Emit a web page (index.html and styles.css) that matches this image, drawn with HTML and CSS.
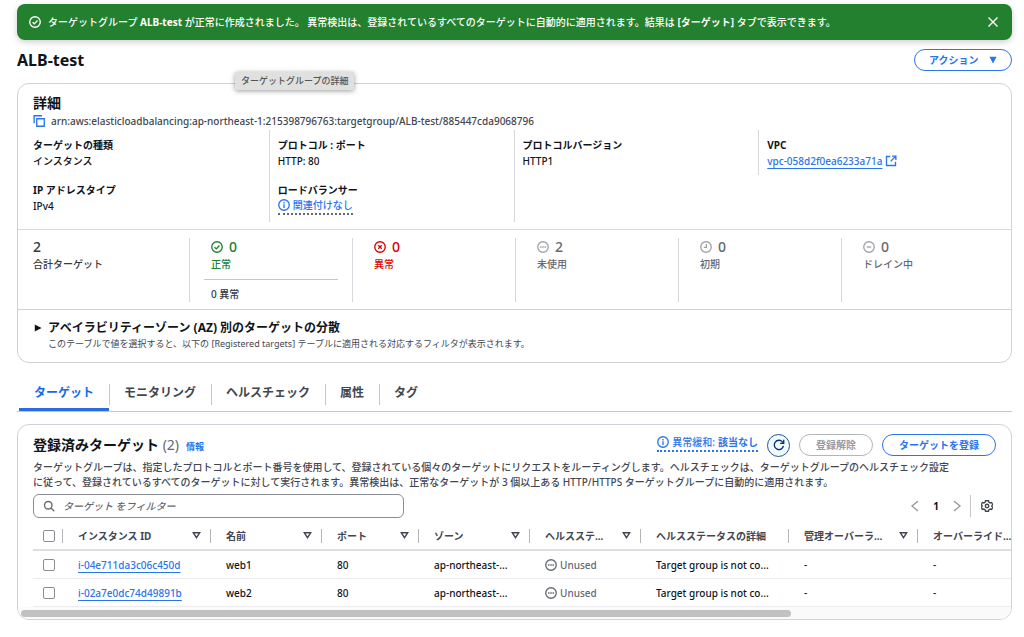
FILE: index.html
```html
<!DOCTYPE html>
<html lang="ja">
<head>
    <meta charset="UTF-8">
    <meta name="viewport" content="width=device-width, initial-scale=1.0">
    <title>ALB-test | ターゲットグループ</title>
    <link rel="stylesheet" href="styles.css">
</head>
<body>

    <!-- アイコン定義 -->
    <svg class="defs" aria-hidden="true">
        <symbol id="i-check" viewBox="0 0 16 16"><circle cx="8" cy="8" r="7"/><path d="M4.8 8.2l2.3 2.3 4.2-4.6"/></symbol>
        <symbol id="i-error" viewBox="0 0 16 16"><circle cx="8" cy="8" r="7"/><path d="M5.7 5.7l4.6 4.6M10.3 5.7l-4.6 4.6"/></symbol>
        <symbol id="i-dots" viewBox="0 0 16 16"><circle cx="8" cy="8" r="7"/><path d="M4 8h2M7 8h2M10 8h2"/></symbol>
        <symbol id="i-clock" viewBox="0 0 16 16"><circle cx="8" cy="8" r="7"/><path d="M8.5 4v4.5H5"/></symbol>
        <symbol id="i-minus" viewBox="0 0 16 16"><circle cx="8" cy="8" r="7"/><path d="M5 8h6"/></symbol>
        <symbol id="i-info" viewBox="0 0 16 16"><circle cx="8" cy="8" r="7"/><path d="M8 4v2M8 7v5"/></symbol>
        <symbol id="i-sort" viewBox="0 0 10 10"><path d="M1.5 2h7L5 7.5z"/></symbol>
    </svg>

    <div class="flash" role="status">
        <svg class="icon"><use href="#i-check"/></svg>
        <p>ターゲットグループ <b>ALB-test</b> が正常に作成されました。 異常検出は、登録されているすべてのターゲットに自動的に適用されます。結果は <b>[ターゲット]</b> タブで表示できます。</p>
        <button class="icon-btn" aria-label="閉じる"><svg class="icon" viewBox="0 0 16 16"><path d="M2 2l12 12M14 2L2 14"/></svg></button>
    </div>

    <header class="page-header">
        <h1>ALB-test</h1>
        <button class="btn btn-action">アクション <svg class="caret" viewBox="0 0 10 10"><path d="M0.5 1h9L5 9.5z"/></svg></button>
    </header>

    <main>
        <section class="card details">
            <div class="tooltip" role="tooltip">ターゲットグループの詳細</div>
            <div class="details-head">
                <h2>詳細</h2>
                <div class="arn">
                    <button class="icon-btn" aria-label="ARN をコピー"><svg class="icon copy" viewBox="0 0 16 16"><path d="M5 5h10v10H5zM1.5 11V1H12"/></svg></button>
                    <span>arn:aws:elasticloadbalancing:ap-northeast-1:215398796763:targetgroup/ALB-test/885447cda9068796</span>
                </div>
            </div>

            <div class="attributes">
                <dl>
                    <dt>ターゲットの種類</dt>
                    <dd>インスタンス</dd>
                    <dt>IP アドレスタイプ</dt>
                    <dd>IPv4</dd>
                </dl>
                <dl>
                    <dt>プロトコル : ポート</dt>
                    <dd>HTTP: 80</dd>
                    <dt>ロードバランサー</dt>
                    <dd><button class="popover-link dark"><svg class="icon"><use href="#i-info"/></svg>関連付けなし</button></dd>
                </dl>
                <dl>
                    <dt>プロトコルバージョン</dt>
                    <dd>HTTP1</dd>
                </dl>
                <dl class="short">
                    <dt>VPC</dt>
                    <dd><a href="#">vpc-058d2f0ea6233a71a</a><svg class="icon external" viewBox="0 0 16 16"><path d="M7 2H2v12h12V9M9.5 1.5h5v5M14 2L7.5 8.5"/></svg></dd>
                </dl>
            </div>

            <div class="stats">
                <div class="stat">
                    <div class="count">2</div>
                    <div>合計ターゲット</div>
                </div>
                <div class="stat healthy">
                    <div class="count"><svg class="icon"><use href="#i-check"/></svg>0</div>
                    <div>正常</div>
                    <div class="anomalous">0 異常</div>
                </div>
                <div class="stat unhealthy">
                    <div class="count"><svg class="icon"><use href="#i-error"/></svg>0</div>
                    <div>異常</div>
                </div>
                <div class="stat muted">
                    <div class="count"><svg class="icon"><use href="#i-dots"/></svg>2</div>
                    <div>未使用</div>
                </div>
                <div class="stat muted">
                    <div class="count"><svg class="icon"><use href="#i-clock"/></svg>0</div>
                    <div>初期</div>
                </div>
                <div class="stat muted">
                    <div class="count"><svg class="icon"><use href="#i-minus"/></svg>0</div>
                    <div>ドレイン中</div>
                </div>
            </div>

            <div class="zones">
                <button class="expander" aria-expanded="false"><svg class="caret" viewBox="0 0 10 10"><path d="M1 0.5v9L9.5 5z"/></svg>アベイラビリティーゾーン (AZ) 別のターゲットの分散</button>
                <p>このテーブルで値を選択すると、以下の [Registered targets] テーブルに適用される対応するフィルタが表示されます。</p>
            </div>
        </section>

        <nav class="tabs" role="tablist">
            <button role="tab" class="tab active" aria-selected="true">ターゲット</button>
            <button role="tab" class="tab">モニタリング</button>
            <button role="tab" class="tab">ヘルスチェック</button>
            <button role="tab" class="tab">属性</button>
            <button role="tab" class="tab">タグ</button>
        </nav>

        <section class="card targets">
            <div class="targets-head">
                <h2>登録済みターゲット <span>(2)</span></h2>
                <a class="info" href="#">情報</a>
                <div class="actions">
                    <button class="popover-link"><svg class="icon"><use href="#i-info"/></svg>異常緩和: <b>該当なし</b></button>
                    <button class="btn btn-refresh" aria-label="更新"><svg class="icon" viewBox="0 0 16 16"><path d="M14 9.2A6.2 6.2 0 1 1 12.6 3.8L14 5.3M14.3 1v4.8H9.5"/></svg></button>
                    <button class="btn" disabled>登録解除</button>
                    <button class="btn">ターゲットを登録</button>
                </div>
            </div>
            <p class="description">ターゲットグループは、指定したプロトコルとポート番号を使用して、登録されている個々のターゲットにリクエストをルーティングします。ヘルスチェックは、ターゲットグループのヘルスチェック設定<br>に従って、登録されているすべてのターゲットに対して実行されます。異常検出は、正常なターゲットが 3 個以上ある HTTP/HTTPS ターゲットグループに自動的に適用されます。</p>

            <div class="toolbar">
                <label class="filter">
                    <svg class="icon" viewBox="0 0 16 16"><circle cx="7" cy="7" r="5"/><path d="M10.8 10.8L15 15"/></svg>
                    <input type="text" placeholder="ターゲット をフィルター" aria-label="ターゲット をフィルター">
                </label>
                <div class="pager">
                    <button class="icon-btn" aria-label="前へ"><svg class="icon" viewBox="0 0 16 16"><path d="M12 1.5L4 8l8 6.5"/></svg></button>
                    <b>1</b>
                    <button class="icon-btn" aria-label="次へ"><svg class="icon" viewBox="0 0 16 16"><path d="M4 1.5L12 8l-8 6.5"/></svg></button>
                </div>
                <button class="icon-btn settings" aria-label="設定"><svg class="icon" viewBox="0 0 16 16"><path d="M6 1h4l.6 2 1.6.9 2-.6 1.4 2.9L14.3 8l1.3 1.8-1.4 2.9-2-.6-1.6.9L10 15H6l-.6-2-1.6-.9-2 .6L.4 9.8 1.7 8 .4 6.2l1.4-2.9 2 .6L5.4 3z"/><circle cx="8" cy="8" r="2.3"/></svg></button>
            </div>

            <div class="table-wrap">
                <table>
                    <colgroup>
                        <col class="c-select">
                        <col class="c-id">
                        <col class="c-name">
                        <col class="c-port">
                        <col class="c-zone">
                        <col class="c-health">
                        <col class="c-detail">
                        <col class="c-admin">
                        <col>
                    </colgroup>
                    <thead>
                        <tr>
                            <th class="select"><input type="checkbox" aria-label="すべて選択"></th>
                            <th><div><span>インスタンス ID</span><svg class="sort"><use href="#i-sort"/></svg></div></th>
                            <th><div><span>名前</span><svg class="sort"><use href="#i-sort"/></svg></div></th>
                            <th><div><span>ポート</span><svg class="sort"><use href="#i-sort"/></svg></div></th>
                            <th><div><span>ゾーン</span><svg class="sort"><use href="#i-sort"/></svg></div></th>
                            <th><div><span>ヘルスステ...</span><svg class="sort"><use href="#i-sort"/></svg></div></th>
                            <th><div><span>ヘルスステータスの詳細</span></div></th>
                            <th><div><span>管理オーバーラ...</span><svg class="sort"><use href="#i-sort"/></svg></div></th>
                            <th><div><span>オーバーライド...</span></div></th>
                        </tr>
                    </thead>
                    <tbody>
                        <tr>
                            <td class="select"><input type="checkbox" aria-label="web1 を選択"></td>
                            <td><a href="#">i-04e711da3c06c450d</a></td>
                            <td>web1</td>
                            <td>80</td>
                            <td>ap-northeast-...</td>
                            <td class="unused"><svg class="icon"><use href="#i-dots"/></svg>Unused</td>
                            <td>Target group is not co...</td>
                            <td>-</td>
                            <td>-</td>
                        </tr>
                        <tr>
                            <td class="select"><input type="checkbox" aria-label="web2 を選択"></td>
                            <td><a href="#">i-02a7e0dc74d49891b</a></td>
                            <td>web2</td>
                            <td>80</td>
                            <td>ap-northeast-...</td>
                            <td class="unused"><svg class="icon"><use href="#i-dots"/></svg>Unused</td>
                            <td>Target group is not co...</td>
                            <td>-</td>
                            <td>-</td>
                        </tr>
                    </tbody>
                </table>
            </div>
            <div class="scrollbar"><div class="thumb"></div></div>
        </section>
    </main>

</body>
</html>
```
FILE: styles.css
```css
* {
    box-sizing: border-box;
}

body {
    margin: 0;
    padding: 4px 12px 16px 17px;
    background-color: white;
    color: #0f141a;
    font-family: "Noto Sans", "Noto Sans CJK JP", sans-serif;
    font-size: 10px;
    font-weight: 500;
    line-height: 16px;
}

h1, h2, p, dl, dd {
    margin: 0;
}

button, input {
    font: inherit;
    color: inherit;
}

button {
    padding: 0;
    border: none;
    background: none;
    cursor: pointer;
    white-space: nowrap;
}

a {
    color: #2a74ec;
    text-underline-offset: 3px;
}

.defs {
    display: none;
}

.icon {
    width: 12px;
    height: 12px;
    flex: none;
    fill: none;
    stroke: currentColor;
    stroke-width: 1.8;
}

.icon-btn {
    display: flex;
    align-items: center;
}

.caret {
    width: 8px;
    height: 8px;
    fill: currentColor;
}

/* Bandeau */
.flash {
    display: flex;
    align-items: center;
    gap: 7px;
    height: 36px;
    padding: 0 13px 0 12px;
    border-radius: 8px;
    background-color: #22802e;
    color: white;
    box-shadow: 0 2px 6px rgba(0, 0, 0, 0.2);
}

.flash p {
    flex: 1;
    white-space: nowrap;
}

.page-header {
    display: flex;
    justify-content: space-between;
    align-items: center;
    height: 40px;
}

h1 {
    font-size: 16px;
    line-height: 24px;
}

h2 {
    font-size: 14px;
    line-height: 20px;
}

.btn {
    height: 22px;
    padding: 0 16px;
    border: 1px solid #2a74ec;
    border-radius: 11px;
    background-color: white;
    color: #2a74ec;
    font-weight: bold;
    line-height: 20px;
}

.btn:disabled {
    border-color: #b4b4bb;
    color: #9a9aa5;
}

.btn-action {
    padding: 0 14px;
}

.btn-action .caret {
    margin-left: 8px;
}

.card {
    position: relative;
    border: 1px solid #cfd2d8;
    border-radius: 12px;
}

.details {
    margin-top: 3px;
}

.tooltip {
    position: absolute;
    top: -12px;
    left: 217px;
    padding: 0 6px;
    border-radius: 2px;
    background-color: #e0e0df;
    color: #555;
    font-size: 9px;
    line-height: 18px;
    box-shadow: 0 1px 5px rgba(0, 0, 0, 0.4);
}

.details-head {
    padding: 9px 15px 0;
}

.arn {
    display: flex;
    align-items: center;
    gap: 6px;
    color: #424650;
}

.arn .icon {
    color: #2a74ec;
}

/* Attributs */
.attributes {
    display: grid;
    grid-template-columns: repeat(4, 1fr);
    padding: 1px 8px 7px 6px;
    border-bottom: 1px solid #d6d8dd;
}

.attributes dl {
    height: 92px;
    padding: 7px 8px 0;
    border-left: 1px solid #d6d8dd;
}

.attributes dl:first-child {
    border-color: transparent;
}

.attributes dl.short {
    height: 45px;
}

dt {
    font-weight: bold;
}

dd {
    display: flex;
    align-items: center;
    gap: 3px;
    height: 16px;
    margin-bottom: 13px;
}

dd .external {
    color: #2a74ec;
}

.popover-link {
    display: flex;
    align-items: center;
    gap: 3px;
    border-bottom: 2px dotted #2a74ec;
    color: #2a74ec;
}

.popover-link.dark {
    border-color: #656871;
}

/* Compteurs */
.stats {
    display: grid;
    grid-template-columns: repeat(6, 1fr);
    padding: 8px 7px 7px 8px;
    border-bottom: 1px solid #d0d2d8;
}

.stat {
    height: 64px;
    padding: 0 14px 0 21px;
    border-left: 1px solid #d6d8dd;
    color: #33383f;
}

.stat:first-child {
    padding-left: 6px;
    border-color: transparent;
}

.count {
    display: flex;
    align-items: center;
    gap: 6px;
    height: 18px;
    font-size: 14px;
}

.healthy {
    color: #22802e;
}

.unhealthy {
    color: #db0000;
}

.muted {
    color: #656871;
}

.muted .icon {
    color: #a0a3aa;
}

.anomalous {
    margin: 7px 0 0 -7px;
    padding: 6px 7px 0;
    border-top: 1px solid #c6c6cd;
    color: #33383f;
}

.zones {
    padding: 10px 15px 10px 16px;
}

.expander {
    display: flex;
    align-items: center;
    gap: 6px;
    font-size: 12px;
    font-weight: bold;
    line-height: 16px;
}

.zones p {
    margin-left: 14px;
    color: #424650;
    font-size: 9px;
    font-weight: normal;
}

/* Onglets */
.tabs {
    display: flex;
    height: 34px;
    margin-top: 15px;
    padding-left: 2px;
    border-bottom: 1px solid #c6c6cd;
}

.tab {
    position: relative;
    padding: 0 15px;
    border-bottom: 3px solid transparent;
    color: #424650;
    font-size: 12px;
    font-weight: bold;
}

.tab + .tab::before {
    content: "";
    position: absolute;
    top: 6px;
    left: 0;
    width: 1px;
    height: 21px;
    background-color: #c6c6cd;
}

.tab.active {
    border-color: #2a6bdf;
    color: #1669ec;
}

/* Cibles */
.targets {
    margin-top: 12px;
    overflow: hidden;
}

.targets-head {
    display: flex;
    align-items: center;
    height: 24px;
    margin: 8px 15px 0;
}

.targets-head h2 span {
    color: #656871;
    font-weight: normal;
}

.info {
    margin: 3px 0 0 7px;
    font-size: 9px;
    font-weight: bold;
    text-decoration: none;
}

.actions {
    display: flex;
    align-items: center;
    gap: 9px;
    margin-left: auto;
}

.actions .popover-link {
    margin-bottom: 4px;
}

.btn-refresh {
    display: flex;
    align-items: center;
    justify-content: center;
    width: 23px;
    height: 23px;
    padding: 0;
    border-color: #24568f;
    border-radius: 50%;
    background-color: #f0fbff;
    color: #0b3268;
}

.description {
    padding: 3px 15px 0;
    color: #424650;
    line-height: 15px;
    white-space: nowrap;
}

.toolbar {
    display: flex;
    align-items: center;
    margin: 4px 15px 0;
}

.filter {
    display: flex;
    align-items: center;
    flex: 0 1 371px;
    gap: 8px;
    height: 24px;
    padding: 0 9px;
    border: 1px solid #8c8c94;
    border-radius: 6px;
    color: #656871;
}

.filter input {
    flex: 1;
    padding: 0;
    border: none;
    outline: none;
}

.filter input::placeholder {
    color: #656871;
    font-style: italic;
}

.pager {
    display: flex;
    align-items: center;
    gap: 12px;
    margin-left: auto;
}

.pager .icon {
    color: #9a9aa5;
}

.settings {
    height: 22px;
    margin-left: 7px;
    padding: 0 3px 0 10px;
    border-left: 1px solid #c6c6cd;
    color: #424650;
}

.table-wrap {
    margin: 4px 0 0 15px;
    overflow: hidden;
}

table {
    width: 1236px;
    border-collapse: separate;
    border-spacing: 0;
    table-layout: fixed;
}

.c-select {
    width: 29px;
}

.c-id, .c-detail {
    width: 148px;
}

.c-name, .c-zone, .c-health {
    width: 111px;
}

.c-port {
    width: 97px;
}

.c-admin {
    width: 129px;
}

th, td {
    padding: 0 0 0 16px;
    text-align: left;
    white-space: nowrap;
}

th {
    height: 29px;
    border-bottom: 2px solid #dedee3;
    color: #424650;
}

th div {
    display: flex;
    align-items: center;
    justify-content: space-between;
    height: 14px;
    margin-left: -16px;
    padding: 0 9px 0 15px;
    border-left: 1px solid #b4b4bb;
}

td {
    height: 28px;
    border-bottom: 1px solid #ebebf0;
}

.select {
    padding-left: 10px;
}

.select input {
    appearance: none;
    display: block;
    width: 12px;
    height: 12px;
    margin: 0;
    border: 1px solid #8c8c94;
    border-radius: 2px;
}

.sort {
    width: 9px;
    height: 9px;
    fill: none;
    stroke: currentColor;
    stroke-width: 1.6;
}

.unused {
    color: #656871;
}

.unused .icon {
    margin-right: 3px;
    vertical-align: -2px;
}

.scrollbar {
    height: 12px;
    padding: 3px;
    background-color: #fafafa;
}

.thumb {
    width: 78%;
    height: 7px;
    border-radius: 4px;
    background-color: #c1c1c1;
}
```
